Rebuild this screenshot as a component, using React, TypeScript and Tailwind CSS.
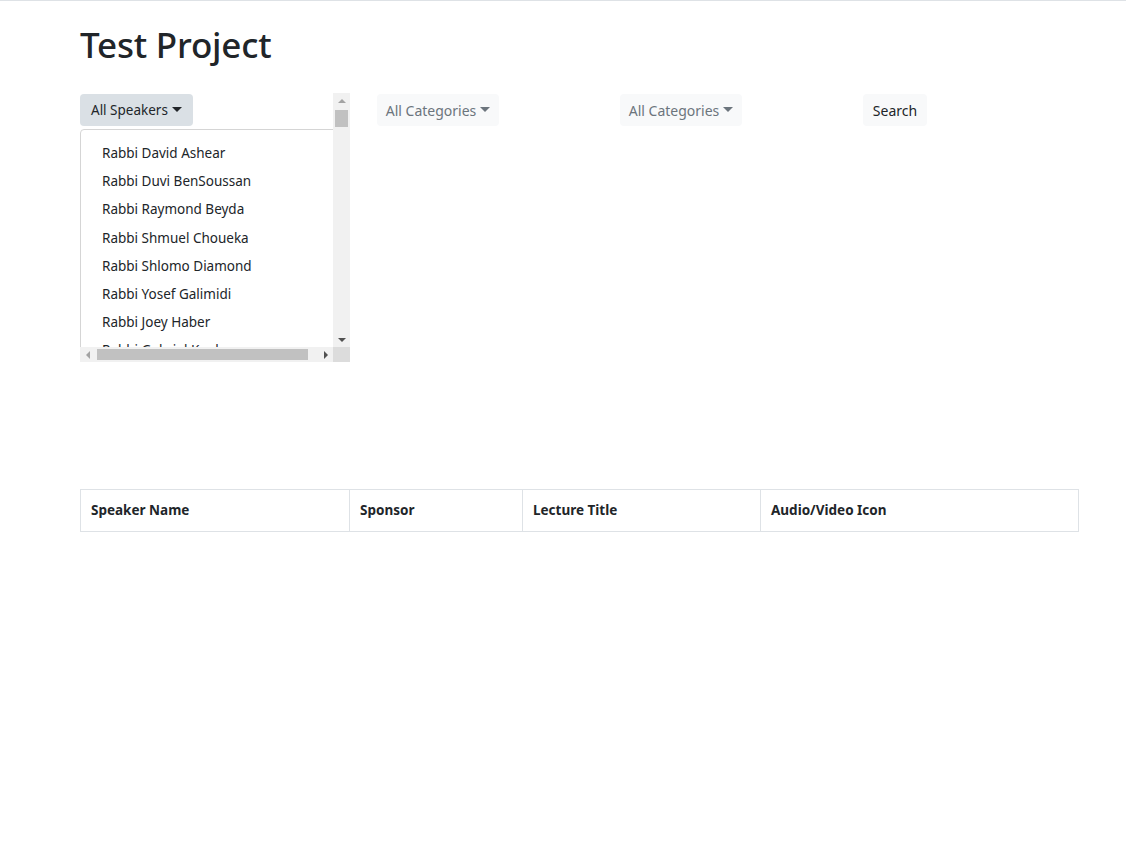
import React from 'react';

const speakers = [
  'Rabbi David Ashear',
  'Rabbi Duvi BenSoussan',
  'Rabbi Raymond Beyda',
  'Rabbi Shmuel Choueka',
  'Rabbi Shlomo Diamond',
  'Rabbi Yosef Galimidi',
  'Rabbi Joey Haber',
  'Rabbi Gabriel Kaplan',
  'Rabbi Eli Mansour',
];

const columns = [
  { label: 'Speaker Name', w: 'w-[268px]' },
  { label: 'Sponsor', w: 'w-[173px]' },
  { label: 'Lecture Title', w: 'w-[238px]' },
  { label: 'Audio/Video Icon', w: 'flex-1' },
];

function Caret() {
  return (
    <span className="ml-[4px] inline-block align-middle w-0 h-0 border-t-[5px] border-t-current border-x-[5px] border-x-transparent relative top-[-1px]" />
  );
}

function Arrow({ dir, dark }: { dir: 'up' | 'down' | 'left' | 'right'; dark?: boolean }) {
  const pts = {
    up: '4,9 8,5 12,9',
    down: '4,7 8,11 12,7',
    left: '9,4 5,8 9,12',
    right: '7,4 11,8 7,12',
  }[dir];
  return (
    <svg width="16" height="16" viewBox="0 0 16 16">
      <polygon points={pts} fill={dark ? '#505050' : '#a3a3a3'} />
    </svg>
  );
}

export default function App() {
  return (
    <div className="min-h-screen bg-white border-t border-[#dee2e6] text-[#212529]" style={{ fontFamily: '"Noto Sans", "Open Sans", sans-serif' }}>
      <div className="pl-[80px] pr-[47px]">
        <h1 className="pt-[20px] text-[35px] font-medium leading-[48px] tracking-[-0.2px]">Test Project</h1>

        <div className="mt-[24px] flex items-start">
          {/* speakers dropdown in scroll box */}
          <div className="w-[270px] h-[269px] flex flex-col">
            <div className="flex flex-1 min-h-0">
              <div className="flex-1 overflow-hidden flex flex-col">
                <button className="mt-[1px] shrink-0 self-start h-[32px] px-[11px] rounded-[4px] bg-[#dae0e5] text-[13.5px] text-[#212529] flex items-center">
                  All Speakers
                  <Caret />
                </button>
                <div className="mt-[3px] w-[290px] shrink-0 border border-[#d5d5d5] rounded-t-[4px] py-[9px]">
                  {speakers.map(s => (
                    <div key={s} className="h-[28.2px] px-[21px] flex items-center text-[13.5px] whitespace-nowrap">{s}</div>
                  ))}
                </div>
              </div>
              <div className="w-[17px] bg-[#f1f1f1] flex flex-col items-center">
                <div className="h-[17px] flex items-center justify-center"><Arrow dir="up" /></div>
                <div className="w-[13px] h-[17px] bg-[#c1c1c1]" />
                <div className="flex-1" />
                <div className="h-[17px] flex items-center justify-center"><Arrow dir="down" dark /></div>
              </div>
            </div>
            <div className="h-[15px] flex">
              <div className="flex-1 bg-[#f1f1f1] flex items-center">
                <div className="w-[17px] flex items-center justify-center"><Arrow dir="left" /></div>
                <div className="w-[211px] h-[11px] bg-[#c1c1c1]" />
                <div className="flex-1" />
                <div className="w-[17px] flex items-center justify-center"><Arrow dir="right" dark /></div>
              </div>
              <div className="w-[17px] bg-[#dcdcdc]" />
            </div>
          </div>

          <button className="ml-[27px] mt-[1px] h-[32px] w-[122px] rounded-[4px] bg-[#f8f9fa] text-[14px] text-[#6c757d] flex items-center justify-center">
            All Categories
            <Caret />
          </button>
          <button className="ml-[121px] mt-[1px] h-[32px] w-[122px] rounded-[4px] bg-[#f8f9fa] text-[14px] text-[#6c757d] flex items-center justify-center">
            All Categories
            <Caret />
          </button>
          <button className="ml-[121px] mt-[1px] h-[32px] w-[64px] rounded-[4px] bg-[#f8f9fa] text-[14px] text-[#212529] flex items-center justify-center">
            Search
          </button>
        </div>

        <div className="mt-[127px] border border-[#dee2e6] flex h-[43px]">
          {columns.map((c, i) => (
            <div key={c.label} className={`${c.w} ${i > 0 ? 'border-l border-[#dee2e6]' : ''} px-[10px] flex items-center text-[13.5px] font-bold`}>
              {c.label}
            </div>
          ))}
        </div>
      </div>
    </div>
  );
}
